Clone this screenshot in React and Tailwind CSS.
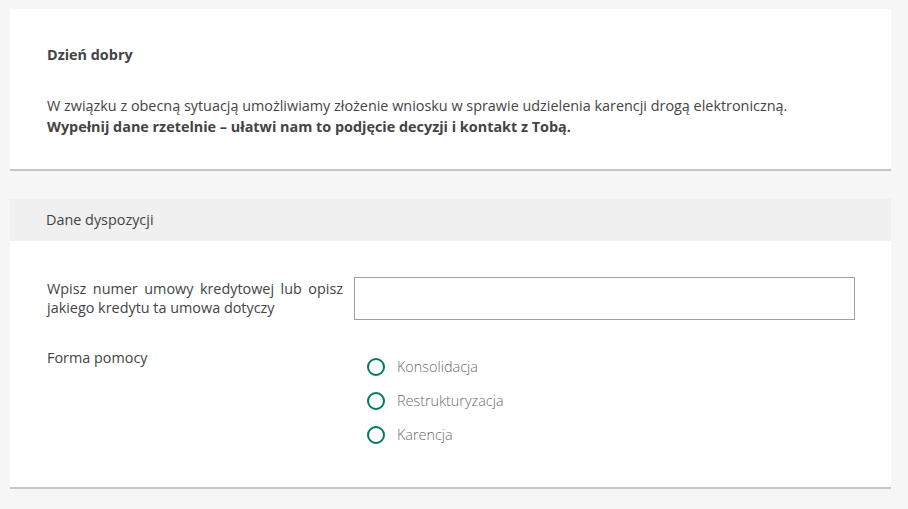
function Radio({ label }) {
  return (
    <label className="flex items-center h-[34px] gap-[12px]">
      <span className="w-[18px] h-[18px] rounded-full border-2 border-[#007a5e] bg-white shrink-0" />
      <span className="font-light text-[#6c6c6c]">{label}</span>
    </label>
  );
}

export default function App() {
  return (
    <div
      className="min-h-screen bg-[#f6f6f6] pt-[9px] px-[10px] pr-[17px] text-[14.4px] text-[#444]"
      style={{ fontFamily: '"Open Sans", sans-serif' }}
    >
      {/* Powitanie */}
      <section className="bg-white border-b-2 border-[#c6c6c6] pl-[37px] pr-[36px] pt-[35px] pb-[32px]">
        <p className="font-bold leading-[21px]">Dzień dobry</p>
        <div className="mt-[30px] leading-[21px]">
          <p>
            W związku z obecną sytuacją umożliwiamy złożenie wniosku w sprawie udzielenia karencji drogą elektroniczną.
          </p>
          <p className="font-bold">
            Wypełnij dane rzetelnie – ułatwi nam to podjęcie decyzji i kontakt z Tobą.
          </p>
        </div>
      </section>

      {/* Dane dyspozycji */}
      <section className="mt-[28px] bg-white border-b-2 border-[#c6c6c6]">
        <div className="bg-[#f0f0f0] h-[42px] flex items-center pl-[36px]">
          <span>Dane dyspozycji</span>
        </div>
        <div className="pl-[37px] pr-[36px] pt-[36px] pb-[35px]">
          <div className="flex gap-[11px]">
            <p className="w-[296px] shrink-0 text-justify leading-[19px] pt-[2px]">
              Wpisz numer umowy kredytowej lub opisz jakiego kredytu ta umowa dotyczy
            </p>
            <input
              type="text"
              className="flex-1 h-[43px] border border-[#a0a0a0] bg-white outline-none px-2"
            />
          </div>
          <div className="flex gap-[11px] mt-[28px]">
            <p className="w-[296px] shrink-0 leading-[20px]">Forma pomocy</p>
            <div className="flex flex-col pl-[13px] pt-[2px]">
              <Radio label="Konsolidacja" />
              <Radio label="Restrukturyzacja" />
              <Radio label="Karencja" />
            </div>
          </div>
        </div>
      </section>
    </div>
  );
}
